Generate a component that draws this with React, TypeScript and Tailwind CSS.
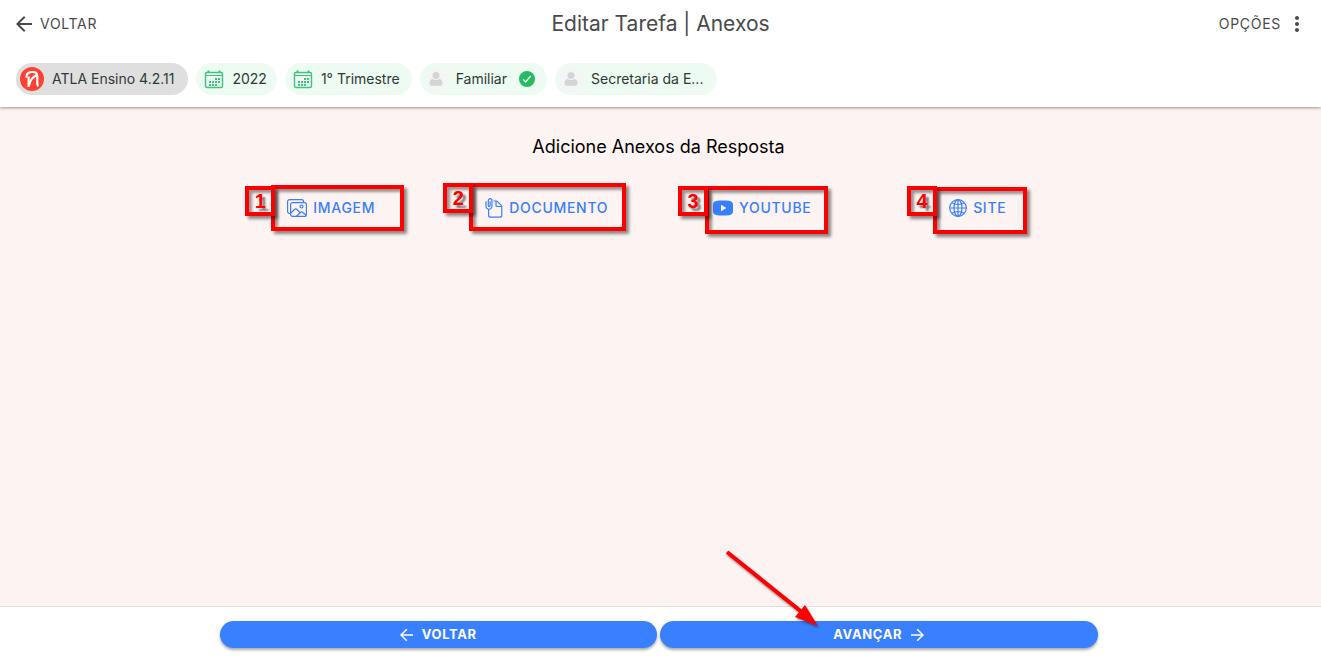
import React from 'react';
import { MdArrowBack, MdMoreVert } from 'react-icons/md';

const CalendarIcon = () => (
  <svg viewBox="0 0 20 20" className="size-5 text-[#3cc47c]" fill="none" stroke="currentColor" aria-hidden="true">
    <rect x="1.5" y="3.5" width="17" height="15" rx="1.6" strokeWidth="1.4" />
    <path d="M1.5 6.5h17" strokeWidth="1" />
    <path d="M4.5 1.500v2.500M15.500 1.500v2.500" strokeWidth="2" />
    <path d="M11 10h5M5 13h11M5 16h8" strokeWidth="2" strokeDasharray="2 1" />
  </svg>
);

const PersonIcon = () => (
  <span className="flex size-6 items-center justify-center rounded-full bg-[#f3f6f4]">
    <svg viewBox="0 0 14 16" className="h-4 w-[14px]" fill="#d4d4d4" aria-hidden="true">
      <circle cx="7" cy="4.5" r="3.5" />
      <path d="M.5 12.3c0-2.500 1-4 3-4.300 1.800 1.200 5.200 1.200 7 0 2 .3 3 1.800 3 4.300 0 1.700-.8 2.400-2 2.400h-9c-1.200 0-2-.7-2-2.400z" />
    </svg>
  </span>
);

const CheckIcon = () => (
  <svg viewBox="0 0 16 16" className="size-4" aria-hidden="true">
    <circle cx="8" cy="8" r="8" fill="#28ba62" />
    <path d="m4.200 8.400 2.300 2.600 5.200-6" fill="none" stroke="#fff" strokeWidth="1.200" />
  </svg>
);

const LogoIcon = () => (
  <svg viewBox="0 0 24 24" className="size-6" fill="none" stroke="#fff" aria-hidden="true">
    <circle cx="12" cy="12" r="12" fill="#ff4134" stroke="none" />
    <path d="M6.300 10.500C6 6.500 9 5 12.500 5c3.300 0 4.800 1.500 4.800 4.200v7.300c0 1.300.3 2 1.200 2.500" strokeWidth="2.200" />
    <path d="M8.600 20V9.500" strokeWidth="2.200" />
    <path d="M9 18.500c.8-4.500 3.500-8.500 7.800-10.500" strokeWidth="2.200" />
  </svg>
);

const ImageIcon = () => (
  <svg viewBox="0 0 20 18" className="h-[18px] w-5" fill="none" stroke="currentColor" strokeWidth="1.200" aria-hidden="true">
    <rect x="3.600" y="3.600" width="15.800" height="13.800" rx="2" />
    <path d="M3.500 14.500H2.600a2 2 0 0 1-2-2V2.600a2 2 0 0 1 2-2h12a2 2 0 0 1 2 2v.8" />
    <circle cx="14.500" cy="7.500" r="1.500" />
    <path d="m3.800 14 4-3.700c.6-.5 1.300-.5 1.900 0l3.500 3.400M9.500 17.200l4.200-4c.6-.5 1.200-.5 1.800 0l3.700 3" />
  </svg>
);

const DocumentIcon = () => (
  <svg viewBox="0 0 18 20" className="h-5 w-[18px]" fill="none" stroke="currentColor" strokeWidth="1.200" aria-hidden="true">
    <path d="M3.600 11.300v5.900a2 2 0 0 0 2 2h9.200a2 2 0 0 0 2-2V8.800c0-.6-.2-1-.6-1.500l-3.700-3.700c-.4-.4-.9-.6-1.500-.6H8.500" />
    <path d="M11 3.200v4c0 .8.500 1.300 1.300 1.300h4.300" />
    <path d="M1 3.200v4.500c0 4.700 6 4.700 6 0V2.800c0-2.800-3.700-2.800-3.700 0v4.700c0 1.500 1.800 1.500 1.800 0V3.200" />
  </svg>
);

const YoutubeIcon = () => (
  <svg viewBox="0 0 20 16" className="h-4 w-5" aria-hidden="true">
    <path d="M4 .8C8 .3 12 .3 16 .8c2.500.2 4 1.700 4 4v6.400c0 2.300-1.500 3.800-4 4-4 .5-8 .5-12 0-2.500-.2-4-1.700-4-4V4.800c0-2.300 1.500-3.800 4-4z" fill="currentColor" />
    <path d="M8 4.800v6.400L13.300 8z" fill="#fff" />
  </svg>
);

const GlobeIcon = () => (
  <svg viewBox="0 0 18 18" className="size-[18px]" fill="none" stroke="currentColor" strokeWidth="1.200" aria-hidden="true">
    <circle cx="9" cy="9" r="8.300" />
    <ellipse cx="9" cy="9" rx="4" ry="8.300" />
    <path d="M9 .7v16.600M.7 9h16.600M3 3.700c3.500 2.300 8.500 2.300 12 0M3 14.300c3.500-2.300 8.500-2.300 12 0" />
  </svg>
);

const ArrowIcon = ({ className = '' }: { className?: string }) => (
  <svg viewBox="0 0 14 14" className={`size-[14px] ${className}`} fill="none" stroke="currentColor" strokeWidth="1.500" aria-hidden="true">
    <path d="M1 7h12M7.200 1.200 13 7l-5.800 5.800" />
  </svg>
);

const attachments = [
  {
    label: 'IMAGEM',
    icon: <ImageIcon />,
    box: '-left-4 -top-[5px] h-[46px] w-[133px]',
    tag: '-left-[42px] -top-1',
  },
  {
    label: 'DOCUMENTO',
    icon: <DocumentIcon />,
    box: '-left-4 -top-[7px] h-12 w-[157px]',
    tag: '-left-[42px] -top-[7px]',
  },
  {
    label: 'YOUTUBE',
    icon: <YoutubeIcon />,
    box: '-left-2 -top-1 h-12 w-[123px]',
    tag: '-left-[35px] -top-1',
  },
  {
    label: 'SITE',
    icon: <GlobeIcon />,
    box: '-left-4 -top-[3px] h-[47px] w-[94px]',
    tag: '-left-[42px] -top-1',
  },
];

const Chip = ({ className = '', children }: { className?: string; children: React.ReactNode }) => (
  <div className={`flex h-8 items-center rounded-full text-sm text-[#2f3a35] ${className}`}>{children}</div>
);

const footerButton =
  'flex h-[27px] flex-1 items-center justify-center gap-2 rounded-full bg-[#3880ff] text-[13px] font-bold tracking-wider text-white shadow-[0_2px_3px_rgba(0,0,0,0.35)]';

export default function App() {
  return (
    <div className="flex min-h-screen flex-col bg-[#fdf3f2] font-[Inter,sans-serif]">
      {/* Header */}
      <header className="relative bg-white pb-3 shadow-[0_1px_3px_rgba(0,0,0,0.4)]">
        <div className="grid h-[47px] grid-cols-[1fr_auto_1fr] items-center px-3 text-[#4a4a4a]">
          <button className="flex items-center gap-1 justify-self-start text-sm tracking-wider">
            <MdArrowBack className="size-6" />
            VOLTAR
          </button>
          <h1 className="text-[21px]">Editar Tarefa | Anexos</h1>
          <button className="flex items-center gap-1 justify-self-end text-sm tracking-wider">
            OPÇÕES
            <MdMoreVert className="size-6" />
          </button>
        </div>
        <div className="flex flex-wrap gap-2 px-4 pt-4">
          <Chip className="gap-2 bg-[#dfdfdf] pr-3.5 pl-1">
            <LogoIcon />
            ATLA Ensino 4.2.11
          </Chip>
          <Chip className="gap-2 bg-[#edfbf3] pr-2.5 pl-2">
            <CalendarIcon />
            2022
          </Chip>
          <Chip className="gap-2 bg-[#edfbf3] pr-3 pl-2">
            <CalendarIcon />
            1° Trimestre
          </Chip>
          <Chip className="gap-2 bg-[#edfbf3] pr-3 pl-1">
            <PersonIcon />
            <span className="mr-1">Familiar</span>
            <CheckIcon />
          </Chip>
          <Chip className="gap-2 bg-[#edfbf3] pr-3.5 pl-1">
            <PersonIcon />
            Secretaria da E...
          </Chip>
        </div>
      </header>

      {/* Attachments */}
      <main className="flex-1 pt-7 pr-1">
        <h2 className="text-center text-lg leading-6 text-black">Adicione Anexos da Resposta</h2>
        <div className="mx-auto mt-[31px] grid w-2/3 grid-cols-4 pr-3 pl-1">
          {attachments.map((item, i) => (
            <div key={item.label} className="flex justify-center">
              <div className="relative">
                <button className="flex h-9 items-center gap-1.5 text-sm font-medium tracking-wider text-[#3880ff]">
                  {item.icon}
                  {item.label}
                </button>
                <span
                  className={`pointer-events-none absolute border-4 border-[#ff0000] shadow-[3px_3px_3px_rgba(0,0,0,0.45),inset_3px_3px_3px_rgba(0,0,0,0.4)] ${item.box}`}
                />
                <span
                  className={`pointer-events-none absolute flex size-[30px] items-center justify-center border-4 border-[#ff0000] font-['Liberation_Sans',sans-serif] text-xl font-bold text-[#ff0000] shadow-[3px_3px_3px_rgba(0,0,0,0.45),inset_3px_3px_3px_rgba(0,0,0,0.4)] text-shadow-[3px_3px_2px_rgba(0,0,0,0.5)] ${item.tag}`}
                >
                  {i + 1}
                </span>
              </div>
            </div>
          ))}
        </div>
      </main>

      {/* Footer */}
      <footer className="border-t border-[#e6dcdc] bg-white pt-[14px] pr-1 pb-[14px]">
        <div className="mx-auto flex w-2/3 gap-[3px]">
          <button className={footerButton}>
            <ArrowIcon className="rotate-180" />
            VOLTAR
          </button>
          <div className="relative flex flex-1">
            <button className={footerButton}>
              AVANÇAR
              <ArrowIcon />
            </button>
            <svg
              viewBox="0 0 110 90"
              className="pointer-events-none absolute -top-[76px] left-[60px] h-[90px] w-[110px] drop-shadow-[1px_2px_1px_rgba(0,0,0,0.4)]"
              aria-hidden="true"
            >
              <path d="M7 7 83 68" stroke="#ff0000" strokeWidth="4" />
              <path d="M98 81 75 72l10-12z" fill="#ff0000" />
            </svg>
          </div>
        </div>
      </footer>
    </div>
  );
}
